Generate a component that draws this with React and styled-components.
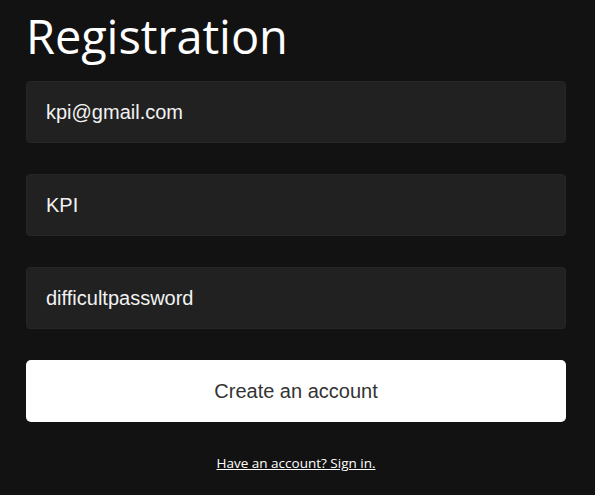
import React from "react";
import styled, { createGlobalStyle } from "styled-components";

const GlobalStyle = createGlobalStyle`
  html, body {
    margin: 0;
    padding: 0;
    background-color: #121212;
  }
`;

const Page = styled.div`
  display: flex;
  flex-direction: column;
  padding: 0 29px 0 26px;
  min-height: 495px;
  box-sizing: border-box;
`;

const Title = styled.h1`
  margin: 4px 0 0 0;
  font-family: "Open Sans", "Noto Sans", sans-serif;
  font-weight: 400;
  font-size: 47px;
  line-height: 64px;
  color: #ffffff;
  letter-spacing: -0.1px;
`;

const Form = styled.form`
  display: flex;
  flex-direction: column;
  gap: 31px;
  margin-top: 13px;
`;

const Input = styled.input`
  height: 62px;
  box-sizing: border-box;
  padding: 0 19px;
  background-color: #212121;
  border: 1px solid #262626;
  border-radius: 4px;
  color: #f2f2f2;
  font-family: "Liberation Sans", Arial, sans-serif;
  font-size: 20px;
  outline: none;
`;

const SubmitButton = styled.button`
  height: 62px;
  border: none;
  border-radius: 5px;
  background-color: #ffffff;
  color: #333333;
  font-family: "Liberation Sans", Arial, sans-serif;
  font-size: 20px;
  cursor: pointer;
`;

const Footer = styled.div`
  display: flex;
  justify-content: center;
  margin-top: 32px;
`;

const SignInLink = styled.a`
  font-family: "Open Sans", "Noto Sans", sans-serif;
  font-size: 13.5px;
  color: #ffffff;
  text-decoration: underline;
  cursor: pointer;
`;

const App = () => {
  return (
    <>
      <GlobalStyle />
      <Page>
        <Title>Registration</Title>
        <Form onSubmit={(e) => e.preventDefault()}>
          <Input type="email" defaultValue="kpi@gmail.com" />
          <Input type="text" defaultValue="KPI" />
          <Input type="text" defaultValue="difficultpassword" />
          <SubmitButton type="submit">Create an account</SubmitButton>
        </Form>
        <Footer>
          <SignInLink>Have an account? Sign in.</SignInLink>
        </Footer>
      </Page>
    </>
  );
};

export default App;
